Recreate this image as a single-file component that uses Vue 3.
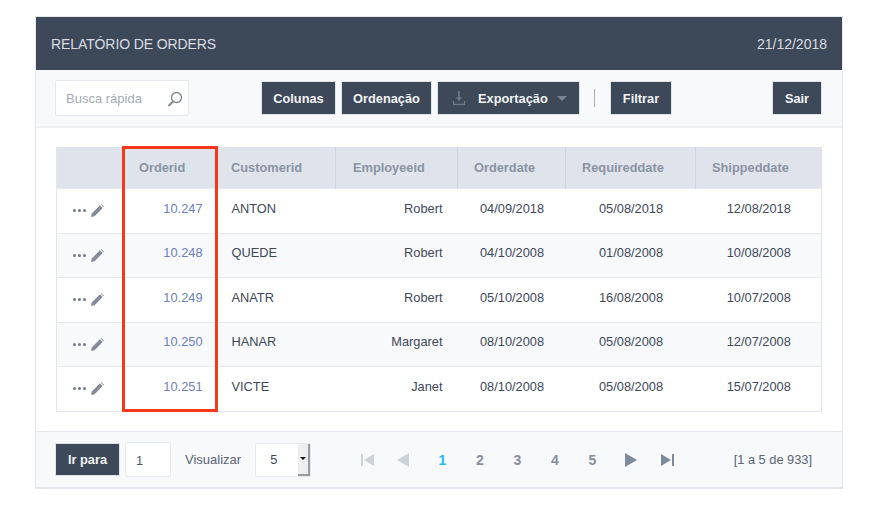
<script setup>
const cols = ['Orderid', 'Customerid', 'Employeeid', 'Orderdate', 'Requireddate', 'Shippeddate']

const rows = [
  { id: '10.247', customer: 'ANTON', employee: 'Robert', order: '04/09/2018', required: '05/08/2018', shipped: '12/08/2018' },
  { id: '10.248', customer: 'QUEDE', employee: 'Robert', order: '04/10/2008', required: '01/08/2008', shipped: '10/08/2008' },
  { id: '10.249', customer: 'ANATR', employee: 'Robert', order: '05/10/2008', required: '16/08/2008', shipped: '10/07/2008' },
  { id: '10.250', customer: 'HANAR', employee: 'Margaret', order: '08/10/2008', required: '05/08/2008', shipped: '12/07/2008' },
  { id: '10.251', customer: 'VICTE', employee: 'Janet', order: '08/10/2008', required: '05/08/2008', shipped: '15/07/2008' }
]

const pages = [1, 2, 3, 4, 5]
</script>

<template>
  <div class="page">
    <section class="panel">
      <header class="title-bar">
        <span class="title">RELATÓRIO DE ORDERS</span>
        <span>21/12/2018</span>
      </header>

      <div class="toolbar">
        <div class="search">
          <span class="search-text">Busca rápida</span>
          <svg width="16" height="16" viewBox="0 0 16 16" fill="none" stroke="#7f8794">
            <circle cx="9.5" cy="6.5" r="5" stroke-width="1.4" />
            <path d="M6 10.5 1.5 15" stroke-width="2" />
          </svg>
        </div>
        <div class="actions">
          <button class="btn b-cols">Colunas</button>
          <button class="btn b-sort">Ordenação</button>
          <button class="btn btn-export">
            <svg width="12" height="14" viewBox="0 0 12 14" fill="#6f7a8a">
              <path d="M5.200 0h1.600v6.500H9L6 10 3 6.500h2.200z" />
              <path d="M0 10h1.200v2.800h9.600V10H12v4H0z" />
            </svg>
            <span class="export-label">Exportação</span>
            <i class="caret"></i>
          </button>
          <span class="divider"></span>
          <button class="btn b-filter">Filtrar</button>
        </div>
        <button class="btn btn-exit">Sair</button>
      </div>

      <div class="content">
        <div class="table-wrap">
          <table class="grid">
            <colgroup>
              <col class="c0" />
              <col class="c1" />
              <col class="c2" />
              <col class="c3" />
              <col class="c4" />
              <col class="c5" />
              <col />
            </colgroup>
            <thead>
              <tr>
                <th></th>
                <th v-for="c in cols" :key="c">{{ c }}</th>
              </tr>
            </thead>
            <tbody>
              <tr v-for="r in rows" :key="r.id">
                <td class="row-actions">
                  <span class="dots"><i></i><i></i><i></i></span>
                  <svg width="13" height="13" viewBox="0 0 13 13" fill="#858c99">
                    <path d="M0 13l.8-3.600L8.900 1.300l2.800 2.800-8.100 8.100z" />
                    <path d="M9.700.5l.6-.5 2.700 2.700-.6.600z" />
                  </svg>
                </td>
                <td class="num">{{ r.id }}</td>
                <td>{{ r.customer }}</td>
                <td class="right">{{ r.employee }}</td>
                <td class="center">{{ r.order }}</td>
                <td class="center">{{ r.required }}</td>
                <td class="center">{{ r.shipped }}</td>
              </tr>
            </tbody>
          </table>
          <div class="highlight"></div>
        </div>
      </div>

      <footer class="pager-bar">
        <button class="btn btn-go">Ir para</button>
        <div class="field">1</div>
        <span class="view-label">Visualizar</span>
        <div class="select">
          <span>5</span>
          <span class="select-arrow"><i></i></span>
        </div>
        <nav class="pager">
          <svg class="first" width="13" height="14" viewBox="0 0 13 14" fill="#ccd2da">
            <path d="M0 1h2v12H0zM13 1v12L3 7z" />
          </svg>
          <svg class="prev" width="12" height="14" viewBox="0 0 12 14" fill="#ccd2da">
            <path d="M12 0v14L0 7z" />
          </svg>
          <span v-for="p in pages" :key="p" class="pg" :class="{ on: p === 1 }">{{ p }}</span>
          <svg class="next" width="12" height="14" viewBox="0 0 12 14" fill="#7f8a9b">
            <path d="M0 0v14l12-7z" />
          </svg>
          <svg class="last" width="13" height="14" viewBox="0 0 13 14" fill="#7f8a9b">
            <path d="M0 1v12l10-6zM11 1h2v12h-2z" />
          </svg>
        </nav>
        <span class="range">[1 a 5 de 933]</span>
      </footer>
    </section>
  </div>
</template>

<style scoped>
.page {
  width: 870px;
  height: 525px;
  padding: 16px 0 0 35px;
  box-sizing: border-box;
  background: #fff;
  font-family: "Liberation Sans", Arial, sans-serif;
  font-size: 12.8px;
  color: #3d4859;
}

.panel {
  width: 808px;
  height: 473px;
  box-sizing: border-box;
  border: 1px solid #e3e7ee;
  border-bottom-width: 2px;
  display: flex;
  flex-direction: column;
}

.title-bar {
  height: 53px;
  flex: none;
  background: #3d4859;
  color: #d9dde3;
  font-size: 14px;
  display: flex;
  align-items: center;
  justify-content: space-between;
  padding: 0 15px;
}

.title {
  letter-spacing: -0.1px;
}

.toolbar {
  height: 58px;
  flex: none;
  box-sizing: border-box;
  background: #f8f9fb;
  border-bottom: 2px solid #eef0f4;
  display: flex;
  align-items: center;
  padding: 0 20px 0 19px;
}

.search {
  width: 134px;
  height: 36px;
  box-sizing: border-box;
  background: #fff;
  border: 1px solid #e6e9ef;
  border-radius: 2px;
  display: flex;
  align-items: center;
  justify-content: space-between;
  padding: 0 5px 0 10px;
}

.search-text {
  color: #a4aab5;
  font-size: 13px;
}

.search svg {
  margin-top: 1px;
}

.actions {
  display: flex;
  align-items: center;
  gap: 5px;
  margin-left: 72px;
}

.btn {
  height: 34px;
  flex: none;
  box-sizing: border-box;
  border: 1px solid #dfe3ea;
  background: #3d4859;
  color: #f1f3f5;
  font-family: inherit;
  font-size: 12.8px;
  font-weight: 700;
  padding: 0;
  display: inline-flex;
  align-items: center;
  justify-content: center;
}

.b-cols {
  width: 75px;
}

.b-sort {
  width: 91px;
}

.b-filter {
  width: 62px;
}

.btn-export {
  width: 143px;
  padding: 0 0 0 15px;
  justify-content: flex-start;
}

.export-label {
  margin-left: 13px;
}

.caret {
  width: 0;
  height: 0;
  border-left: 5px solid transparent;
  border-right: 5px solid transparent;
  border-top: 5px solid #7b8494;
  margin-left: 9px;
}

.divider {
  width: 1px;
  height: 18px;
  background: #a9afb9;
  margin: 0 10px 0 9px;
}

.btn-exit {
  width: 50px;
  margin-left: auto;
}

.content {
  flex: 1;
  background: #fff;
  padding: 19px 20px 0;
  border-bottom: 1px solid #e3e7ee;
}

.table-wrap {
  position: relative;
  width: 766px;
}

.grid {
  width: 766px;
  border-collapse: collapse;
  table-layout: fixed;
  border: 1px solid #e2e6ec;
}

.c0 { width: 66px; }
.c1 { width: 95px; }
.c2 { width: 118px; }
.c3 { width: 122px; }
.c4 { width: 108px; }
.c5 { width: 130px; }

th {
  height: 41px;
  box-sizing: border-box;
  padding: 0 0 1px 16px;
  background: #dfe4ec;
  color: #8b93a3;
  font-size: 12.8px;
  font-weight: 700;
  text-align: left;
  border-left: 1px solid #ced4de;
}

th:first-child {
  border-left: 0;
}

th:nth-child(3) {
  padding-left: 13px;
}

th:nth-child(4) {
  padding-left: 17px;
}

td {
  height: 44.500px;
  box-sizing: border-box;
  padding: 0 15px 5px;
  border-top: 1px solid #e6e9ef;
  color: #3d4859;
  font-size: 12.8px;
}

td:nth-child(3) {
  padding-left: 14px;
}

tbody tr:nth-child(even) td {
  background: #f8f9fb;
}

.num {
  text-align: right;
  color: #6a7fbd;
}

.right {
  text-align: right;
}

.center {
  text-align: center;
  padding: 0 0 5px 1px;
}

.row-actions {
  padding: 0 0 2px 16px;
  white-space: nowrap;
}

.row-actions svg {
  margin-left: 5px;
  vertical-align: middle;
}

.dots {
  display: inline-flex;
  gap: 2px;
  vertical-align: middle;
}

.dots i {
  width: 3px;
  height: 3px;
  border-radius: 50%;
  background: #707887;
}

.highlight {
  position: absolute;
  left: 66px;
  top: -1px;
  width: 96px;
  height: 266px;
  box-sizing: border-box;
  border: 3px solid #f6371b;
  pointer-events: none;
}

.pager-bar {
  height: 55px;
  flex: none;
  background: #f8f9fb;
  display: flex;
  align-items: center;
  padding: 0 30px 0 19px;
}

.btn-go {
  height: 33px;
  width: 65px;
}

.field {
  width: 46px;
  height: 35px;
  box-sizing: border-box;
  background: #fff;
  border: 1px solid #e6e9ef;
  border-radius: 2px;
  margin-left: 5px;
  padding-left: 10px;
  line-height: 35px;
  color: #4d586a;
}

.view-label {
  margin-left: 14px;
  font-size: 13px;
  color: #596477;
}

.select {
  width: 56px;
  height: 34px;
  box-sizing: border-box;
  margin-left: 14px;
  background: #fff;
  border: 1px solid #e6e9ef;
  border-radius: 2px;
  display: flex;
  align-items: center;
  justify-content: space-between;
  padding-left: 14px;
  color: #3d4859;
}

.select-arrow {
  width: 12px;
  height: 32px;
  box-sizing: border-box;
  background: #eceef1;
  border-right: 2px solid #9a9a9a;
  border-bottom: 2px solid #9a9a9a;
  display: flex;
  align-items: center;
  justify-content: center;
}

.select-arrow i {
  width: 0;
  height: 0;
  border-left: 3px solid transparent;
  border-right: 3px solid transparent;
  border-top: 3px solid #111;
}

.pager {
  display: flex;
  align-items: center;
  margin-left: 50px;
}

.prev {
  margin-left: 22.500px;
}

.pg {
  width: 37.500px;
  text-align: center;
  font-size: 14px;
  font-weight: 700;
  color: #858e9e;
}

.pg:first-of-type {
  margin-left: 15px;
}

.pg.on {
  color: #29b6f6;
}

.next {
  margin-left: 14px;
}

.last {
  margin-left: 24px;
}

.range {
  margin-left: auto;
  color: #596477;
}
</style>
